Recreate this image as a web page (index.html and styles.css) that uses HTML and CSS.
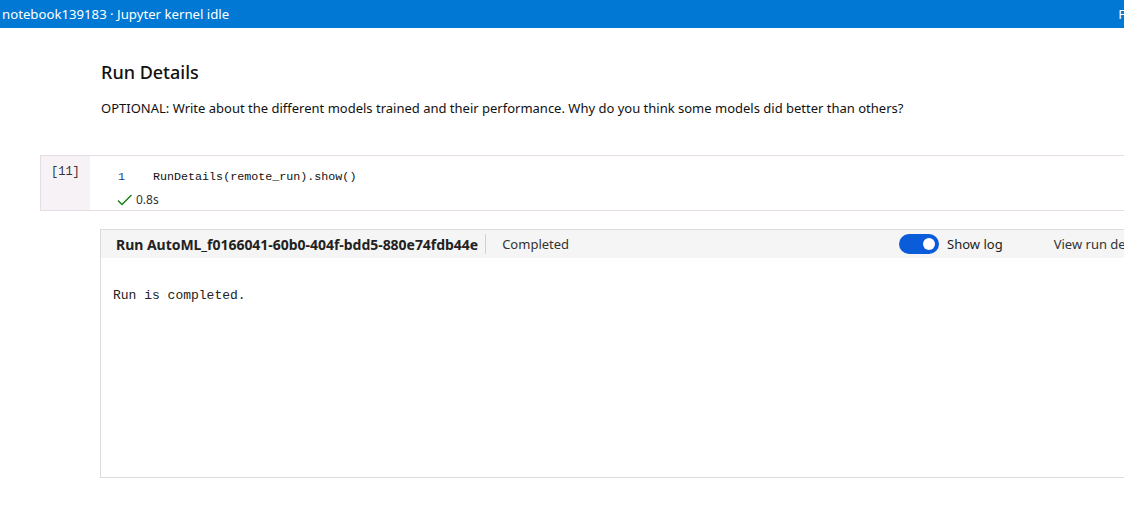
FILE: index.html
```html
<!DOCTYPE html>
<html>
<head>
<meta charset="utf-8">
<link rel="stylesheet" href="styles.css">
</head>
<body>
<div class="topbar">
  <span class="title">notebook139183 · Jupyter kernel idle</span>
  <span class="right">F</span>
</div>
<div class="page">
  <div class="md">
    <h2 class="heading">Run Details</h2>
    <p class="para">OPTIONAL: Write about the different models trained and their performance. Why do you think some models did better than others?</p>
  </div>
  <div class="cell">
    <div class="gutter">[11]</div>
    <div class="cellbody">
      <div class="codeline"><span class="lineno">1</span><span class="code">RunDetails(remote_run).show()</span></div>
      <div class="status">
        <svg class="check" width="16" height="12" viewBox="0 0 16 12"><path d="M1 6.5 L5 10.5 L14.5 1" fill="none" stroke="#107c10" stroke-width="1.3"/></svg>
        <span>0.8s</span>
      </div>
    </div>
  </div>
  <div class="output">
    <div class="outhead">
      <span class="runname">Run AutoML_f0166041-60b0-404f-bdd5-880e74fdb44e</span>
      <span class="sep"></span>
      <span class="state">Completed</span>
      <span class="toggle"><span class="knob"></span></span>
      <span class="showlog">Show log</span>
      <span class="viewrun">View run de</span>
    </div>
    <div class="outbody">
      <pre class="log">Run is completed.</pre>
    </div>
  </div>
</div>
</body>
</html>
```
FILE: styles.css
```css
html, body {
  margin: 0;
  padding: 0;
  background: #ffffff;
  overflow: hidden;
}
body {
  width: 1124px;
  height: 508px;
  font-family: "Noto Sans", "Open Sans", sans-serif;
  color: #1b1b1b;
}
.topbar {
  height: 28px;
  background: #0078d4;
  color: #ffffff;
  display: flex;
  align-items: center;
  justify-content: space-between;
  padding-left: 2px;
  font-size: 13.2px;
  white-space: nowrap;
  overflow: hidden;
}
.topbar .right {
  margin-right: -1px;
}
.page {
  padding-left: 40px;
}
.md {
  padding-left: 61px;
  padding-top: 32px;
}
.heading {
  margin: 0;
  font-size: 18px;
  font-weight: 500;
  line-height: 24px;
  color: #111;
}
.para {
  margin: 15px 0 0 0;
  font-size: 13px;
  line-height: 18px;
  color: #111;
  white-space: nowrap;
}
.cell {
  margin-top: 38px;
  display: flex;
  border: 1px solid #e5dde3;
  border-right: none;
  height: 54px;
}
.gutter {
  width: 49px;
  background: #f7f2f6;
  font-family: "Liberation Mono", monospace;
  font-size: 12px;
  color: #333;
  padding: 9px 0 0 10px;
  box-sizing: border-box;
}
.cellbody {
  flex: 1;
  padding-left: 27px;
}
.codeline {
  display: flex;
  margin-top: 13px;
  font-family: "Liberation Mono", monospace;
  font-size: 11.7px;
  line-height: 16px;
}
.lineno {
  width: 35px;
  color: #1e3a8a;
  padding-left: 1px;
}
.code {
  color: #111;
}
.status {
  display: flex;
  align-items: center;
  gap: 3px;
  margin-top: 6px;
  font-size: 12px;
  color: #333;
}
.output {
  margin-top: 18px;
  margin-left: 60px;
  border: 1px solid #dcdcdc;
  border-right: none;
  height: 247px;
}
.outhead {
  height: 28px;
  background: #f5f5f5;
  display: flex;
  align-items: center;
  padding-left: 15px;
  font-size: 13px;
  white-space: nowrap;
  color: #222;
  overflow: hidden;
}
.outhead > * {
  flex: none;
}
.runname {
  font-weight: 700;
  font-size: 14px;
  letter-spacing: -0.03px;
}
.sep {
  width: 1px;
  height: 20px;
  background: #d0d0d0;
  margin: 0 16px 0 7px;
}
.state {
  color: #333;
}
.toggle {
  margin-left: 330px;
  width: 40px;
  height: 20px;
  border-radius: 10px;
  background: #0a5cd8;
  position: relative;
}
.knob {
  position: absolute;
  right: 4px;
  top: 4px;
  width: 12px;
  height: 12px;
  border-radius: 50%;
  background: #fff;
}
.showlog {
  margin-left: 8px;
  color: #222;
}
.viewrun {
  margin-left: 51px;
  color: #333;
}
.outbody {
  padding: 30px 0 0 12px;
}
.log {
  margin: 0;
  font-family: "Liberation Mono", "Courier New", monospace;
  font-size: 13px;
  color: #222;
}
```
